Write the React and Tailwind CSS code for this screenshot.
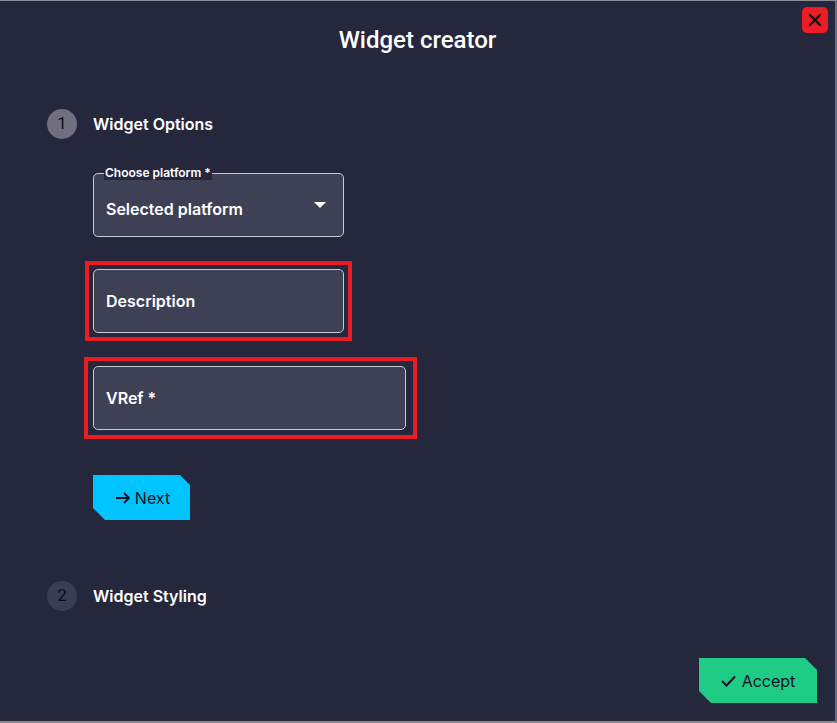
import React from "react";

const font = { fontFamily: "Inter, 'Noto Sans', sans-serif" };

function StepBadge({ n, active }) {
  return (
    <span
      className={`flex h-[30px] w-[30px] shrink-0 items-center justify-center rounded-full text-[17px] text-[#0b0c16] ${
        active ? "bg-[#6f6f80]" : "bg-[#3b3e53]"
      }`}
      style={{ fontFamily: "Roboto, sans-serif" }}
    >
      {n}
    </span>
  );
}

function TextField({ label, width }) {
  return (
    <div className={`flex h-[64px] items-center rounded-[5px] border border-[#c9cad3] bg-[#3e4056] px-3 ${width}`}>
      <span className="text-[16px] font-semibold text-white">{label}</span>
    </div>
  );
}

export default function App() {
  return (
    <div
      className="relative flex h-[723px] w-[837px] flex-col border-t border-r-2 border-b-2 border-t-[#8a8c96] border-r-[#6a6c78] border-b-[#8a8a8a] bg-[#25273c] text-white"
      style={font}
    >
      <button className="absolute right-[7px] top-[6px] flex h-[26px] w-[26px] items-center justify-center rounded-[5px] bg-[#ec1c24]">
        <svg width="14" height="14" viewBox="0 0 14 14">
          <path d="M2 2L12 12M12 2L2 12" stroke="#111" strokeWidth="2.4" strokeLinecap="round" />
        </svg>
      </button>

      <h1
        className="mt-[24px] text-center text-[24px] font-medium leading-[30px]"
        style={{ fontFamily: "Roboto, sans-serif" }}
      >
        Widget creator
      </h1>

      <div className="ml-[47px] mt-[54px] flex items-center gap-[16px]">
        <StepBadge n="1" active />
        <span className="text-[16px] font-semibold">Widget Options</span>
      </div>

      <div className="ml-[93px] flex flex-col">
        <fieldset className="mt-[27px] h-[71px] w-[251px] rounded-[5px] border border-[#c9cad3] bg-[#3e4056] px-3">
          <legend className="-ml-[2px] bg-[#25273c] px-[1px] text-[12px] font-semibold leading-[14px]">
            Choose platform *
          </legend>
          <div className="mt-[17px] flex items-center justify-between">
            <span className="text-[16px] font-semibold">Selected platform</span>
            <svg width="12" height="7" viewBox="0 0 12 7" className="mr-[5px] -mt-[8px]">
              <path d="M0 0H12L6 6Z" fill="#fff" />
            </svg>
          </div>
        </fieldset>

        <div className="-ml-[8px] mt-[24px] w-fit border-4 border-[#ec1c24] p-[4px]">
          <TextField label="Description" width="w-[251px]" />
        </div>

        <div className="-ml-[9px] mt-[16px] w-fit border-4 border-[#ec1c24] py-[5px] pl-[5px] pr-[7px]">
          <TextField label="VRef *" width="w-[313px]" />
        </div>

        <button className="mt-[36px] flex h-[45px] w-[97px] items-center justify-center gap-[4px] bg-[#00c4ff] pl-[2px] text-[16px] text-[#111322] [clip-path:polygon(0_0,calc(100%-10px)_0,100%_10px,100%_100%,12px_100%,0_calc(100%-12px))]">
          <svg width="16" height="12" viewBox="0 0 16 12">
            <path d="M1 6H14M9 1L14 6L9 11" fill="none" stroke="#111322" strokeWidth="1.8" />
          </svg>
          Next
        </button>
      </div>

      <div className="ml-[47px] mt-[61px] flex items-center gap-[16px]">
        <StepBadge n="2" />
        <span className="text-[16px] font-semibold">Widget Styling</span>
      </div>

      <button className="absolute bottom-[18px] right-[18px] flex h-[45px] w-[118px] items-center justify-center gap-[6px] bg-[#1fcc86] text-[16px] text-[#111322] [clip-path:polygon(0_0,calc(100%-12px)_0,100%_12px,100%_100%,12px_100%,0_calc(100%-12px))]">
        <svg width="15" height="12" viewBox="0 0 15 12">
          <path d="M1 6L5.5 10.5L14 1.5" fill="none" stroke="#111322" strokeWidth="2" />
        </svg>
        Accept
      </button>
    </div>
  );
}
